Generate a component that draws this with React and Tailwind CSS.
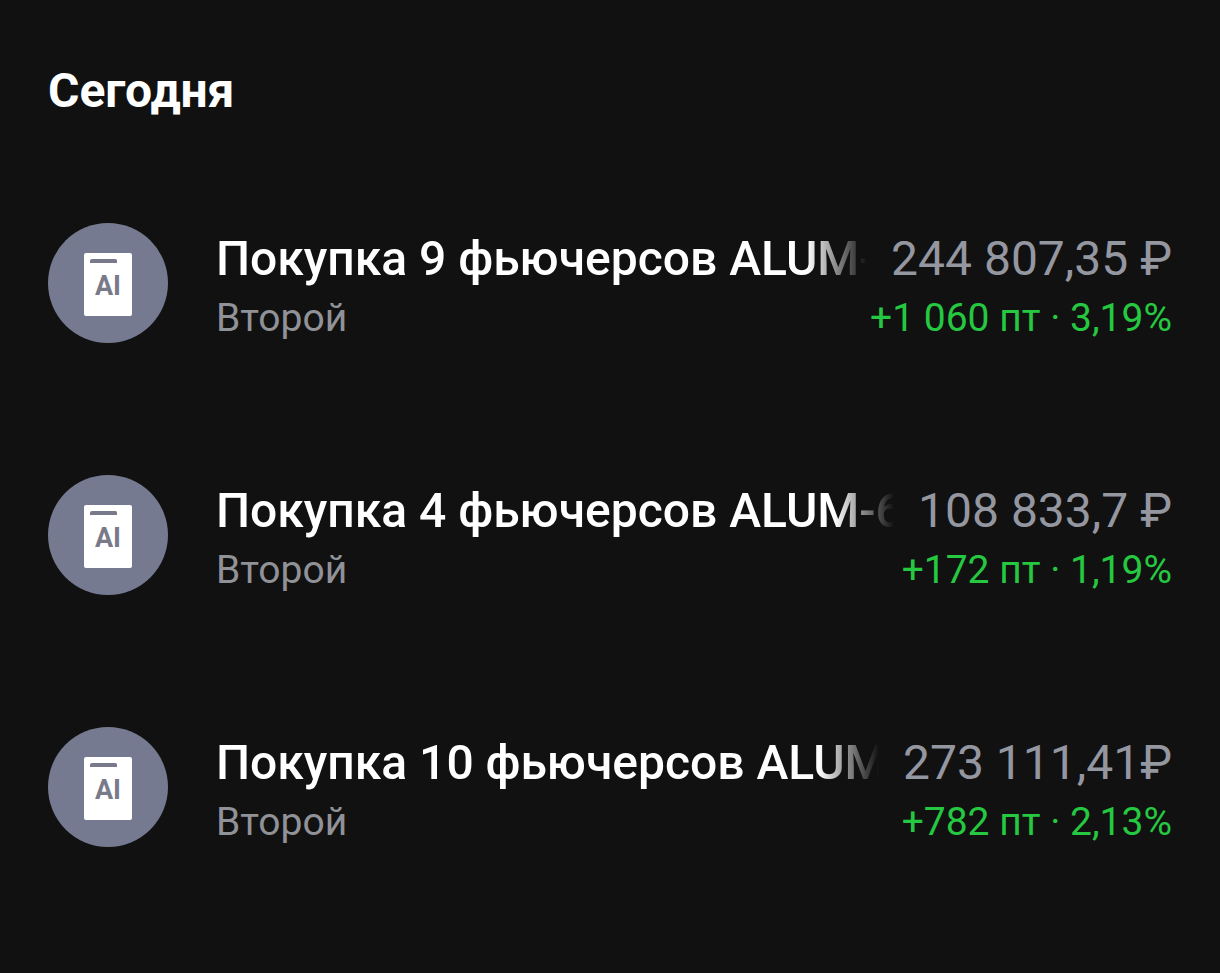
const operations = [
  {
    id: 1,
    title: "Покупка 9 фьючерсов ALUM-6.25",
    account: "Второй",
    amount: "244 807,35 ₽",
    change: "+1 060 пт · 3,19%",
  },
  {
    id: 2,
    title: "Покупка 4 фьючерсов ALUM-6.25",
    account: "Второй",
    amount: "108 833,7 ₽",
    change: "+172 пт · 1,19%",
  },
  {
    id: 3,
    title: "Покупка 10 фьючерсов ALUM-6.25",
    account: "Второй",
    amount: "273 111,41₽",
    change: "+782 пт · 2,13%",
  },
];

// =========================
// CONTRACT ICON
// =========================
function ContractIcon() {
  return (
    <svg
      className="size-30 shrink-0"
      viewBox="0 0 120 120"
      aria-hidden="true"
    >
      <circle cx="60" cy="60" r="60" fill="#757a90" />
      <rect x="36" y="30" width="48" height="63" rx="2" fill="#fff" />
      <path d="M42 40v-2q0-2 2-2h23.500q1.500 0 1.500 1.500V40z" fill="#787a8c" />
      <text
        x="60"
        y="72"
        textAnchor="middle"
        fontSize="27"
        fontWeight="700"
        fill="#787a8a"
      >
        AI
      </text>
    </svg>
  );
}

function OperationRow({ item }) {
  return (
    <li className="flex h-30 items-start">
      <ContractIcon />
      <div className="ml-12 min-w-0 flex-1 pt-1.5">
        <div className="flex items-center gap-6 text-5xl leading-15">
          <p className="min-w-0 flex-1 overflow-hidden whitespace-nowrap font-medium text-white mask-r-from-[calc(100%-60px)]">
            {item.title}
          </p>
          <p className="shrink-0 text-[#9496a0]">{item.amount}</p>
        </div>
        <div className="flex items-center justify-between text-[39px] leading-[58px]">
          <p className="text-[#909298]">{item.account}</p>
          <p className="text-[#25c840]">{item.change}</p>
        </div>
      </div>
    </li>
  );
}

export default function App() {
  return (
    <main className="min-h-screen bg-[#111111] px-12 pt-[61px] pb-15 font-['Roboto',sans-serif]">
      <h1 className="text-5xl font-bold leading-15 text-white">Сегодня</h1>
      <ul className="mt-[102px] space-y-33">
        {operations.map((item) => (
          <OperationRow key={item.id} item={item} />
        ))}
      </ul>
    </main>
  );
}
